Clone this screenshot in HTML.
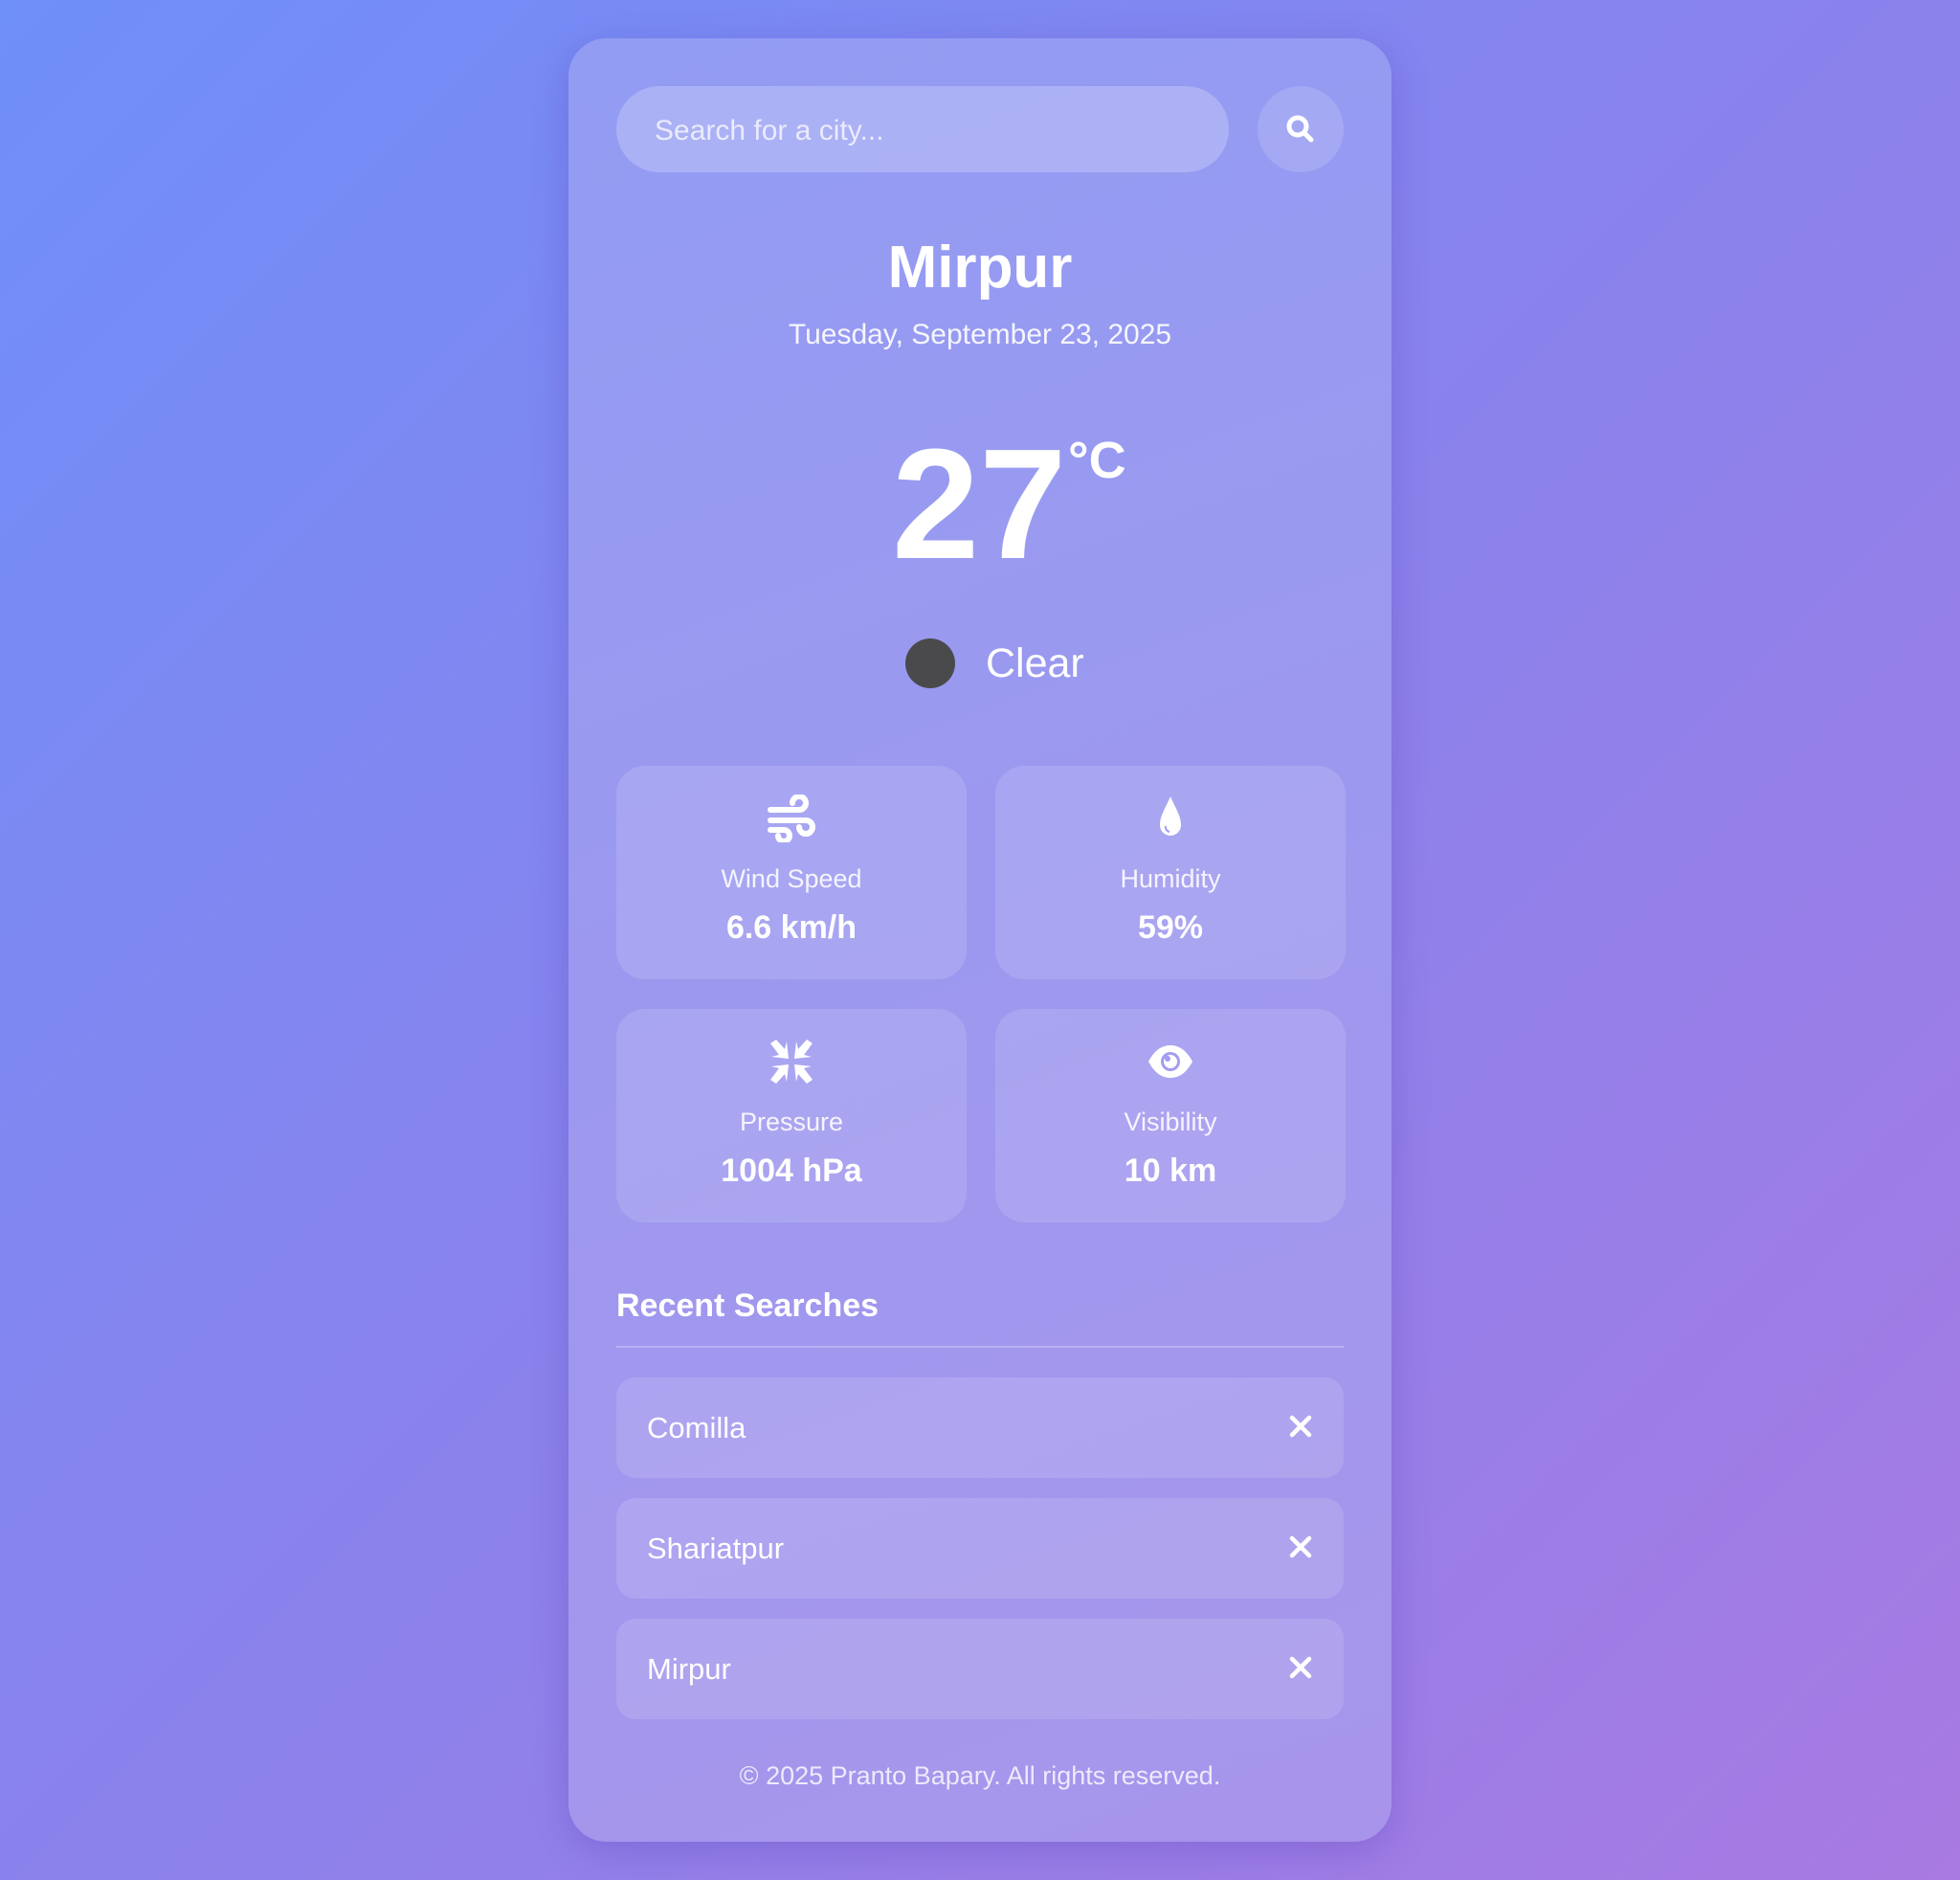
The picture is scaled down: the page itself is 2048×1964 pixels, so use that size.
<!DOCTYPE html>
<html><head><meta charset="utf-8"><style>
*{margin:0;padding:0;box-sizing:border-box}
html,body{width:2048px;height:1964px;overflow:hidden}
body{background:linear-gradient(135deg,#6f8ff9 0%,#8b82ec 50%,#a87ae2 100%);font-family:"Liberation Sans",sans-serif;color:#fff;position:relative}
.card{position:absolute;left:594px;top:40px;width:860px;height:1884px;border-radius:40px;background:linear-gradient(160deg,#929cf3 0%,#9d98ef 50%,#a895eb 100%);box-shadow:0 10px 40px rgba(80,60,180,.3)}
.abs{position:absolute}
.search{left:50px;top:50px;width:640px;height:90px;border-radius:45px;background:rgba(255,255,255,.22);font-size:30px;color:rgba(255,255,255,.75);padding:30px 0 0 40px}
.btn{left:720px;top:50px;width:90px;height:90px;border-radius:50%;background:rgba(255,255,255,.15)}
.c{text-align:center;left:0;width:860px}
.stat{width:366px;height:223px;border-radius:30px;background:rgba(255,255,255,.13)}
.lbl{position:absolute;left:0;width:100%;text-align:center;top:103px;font-size:27px;color:rgba(255,255,255,.88)}
.val{position:absolute;left:0;width:100%;text-align:center;top:150px;font-size:34px;font-weight:bold}
.ic{position:absolute;left:158px;top:30px;width:50px;height:50px}
.item{left:50px;width:760px;height:105px;border-radius:20px;background:rgba(255,255,255,.13);font-size:31px;padding:35px 0 0 32px}
.x{position:absolute;right:30px;top:36px;width:30px;height:30px}
</style></head><body>
<div class="card">
 <div class="abs search">Search for a city...</div>
 <div class="abs btn"><svg width="90" height="90" viewBox="0 0 90 90"><circle cx="42" cy="42" r="9" fill="none" stroke="#fff" stroke-width="5"/><line x1="49" y1="49" x2="56" y2="56" stroke="#fff" stroke-width="5" stroke-linecap="round"/></svg></div>
 <div class="abs c" style="top:204px;font-size:62px;font-weight:bold">Mirpur</div>
 <div class="abs c" style="top:293px;font-size:30px;color:rgba(255,255,255,.9)">Tuesday, September 23, 2025</div>
 <div class="abs" style="left:338px;top:405px;font-size:164px;font-weight:bold;line-height:1">27</div>
 <div class="abs" style="left:522px;top:410px;font-size:54px;font-weight:bold">°C</div>
 <div class="abs" style="left:352px;top:627px;width:52px;height:52px;border-radius:50%;background:#4a4a4c"></div>
 <div class="abs" style="left:436px;top:629px;font-size:43px">Clear</div>

 <div class="abs stat" style="left:50px;top:760px">
  <svg class="ic" viewBox="0 0 50 50"><g fill="none" stroke="#fff" stroke-width="6" stroke-linecap="round"><path d="M3 16H33A7 7 0 1 0 26 9"/><path d="M3 27H40A7 7 0 1 1 33 34"/><path d="M3 37H17A6 6 0 1 1 11 43"/></g></svg>
  <div class="lbl">Wind Speed</div><div class="val">6.6 km/h</div></div>
 <div class="abs stat" style="left:446px;top:760px">
  <svg class="ic" viewBox="0 0 50 50"><path d="M25 2C20 14 14 22 14 32A11 11 0 0 0 36 32C36 22 30 14 25 2Z" fill="#fff"/><path d="M20 33A5 5 0 0 0 24 39" fill="none" stroke="#a09cf0" stroke-width="2"/></svg>
  <div class="lbl">Humidity</div><div class="val">59%</div></div>
 <div class="abs stat" style="left:50px;top:1014px">
  <svg class="ic" viewBox="0 0 50 50" fill="#fff"><path d="M3 6L9 2L18 12L20 4L22 22L4 20L12 18Z"/><path d="M47 6L41 2L32 12L30 4L28 22L46 20L38 18Z"/><path d="M3 44L9 48L18 38L20 46L22 28L4 30L12 32Z"/><path d="M47 44L41 48L32 38L30 46L28 28L46 30L38 32Z"/></svg>
  <div class="lbl">Pressure</div><div class="val">1004 hPa</div></div>
 <div class="abs stat" style="left:446px;top:1014px">
  <svg class="ic" viewBox="0 0 50 50"><path d="M2 25C9 12 17 8 25 8S41 12 48 25C41 38 33 42 25 42S9 38 2 25Z" fill="#fff"/><circle cx="25" cy="25" r="10" fill="#a29df0"/><circle cx="25" cy="25" r="7" fill="#fff"/><circle cx="22" cy="22" r="3" fill="#a29df0"/></svg>
  <div class="lbl">Visibility</div><div class="val">10 km</div></div>

 <div class="abs" style="left:50px;top:1305px;font-size:34px;font-weight:bold">Recent Searches</div>
 <div class="abs" style="left:50px;top:1366px;width:760px;height:2px;background:rgba(255,255,255,.25)"></div>
 <div class="abs item" style="top:1399px">Comilla<svg class="x" viewBox="0 0 30 30"><path d="M6 6L24 24M24 6L6 24" stroke="#fff" stroke-width="4.5" stroke-linecap="round"/></svg></div>
 <div class="abs item" style="top:1525px">Shariatpur<svg class="x" viewBox="0 0 30 30"><path d="M6 6L24 24M24 6L6 24" stroke="#fff" stroke-width="4.5" stroke-linecap="round"/></svg></div>
 <div class="abs item" style="top:1651px">Mirpur<svg class="x" viewBox="0 0 30 30"><path d="M6 6L24 24M24 6L6 24" stroke="#fff" stroke-width="4.5" stroke-linecap="round"/></svg></div>
 <div class="abs c" style="top:1800px;font-size:27px;color:rgba(255,255,255,.8)">© 2025 Pranto Bapary. All rights reserved.</div>
</div>
</body></html>
